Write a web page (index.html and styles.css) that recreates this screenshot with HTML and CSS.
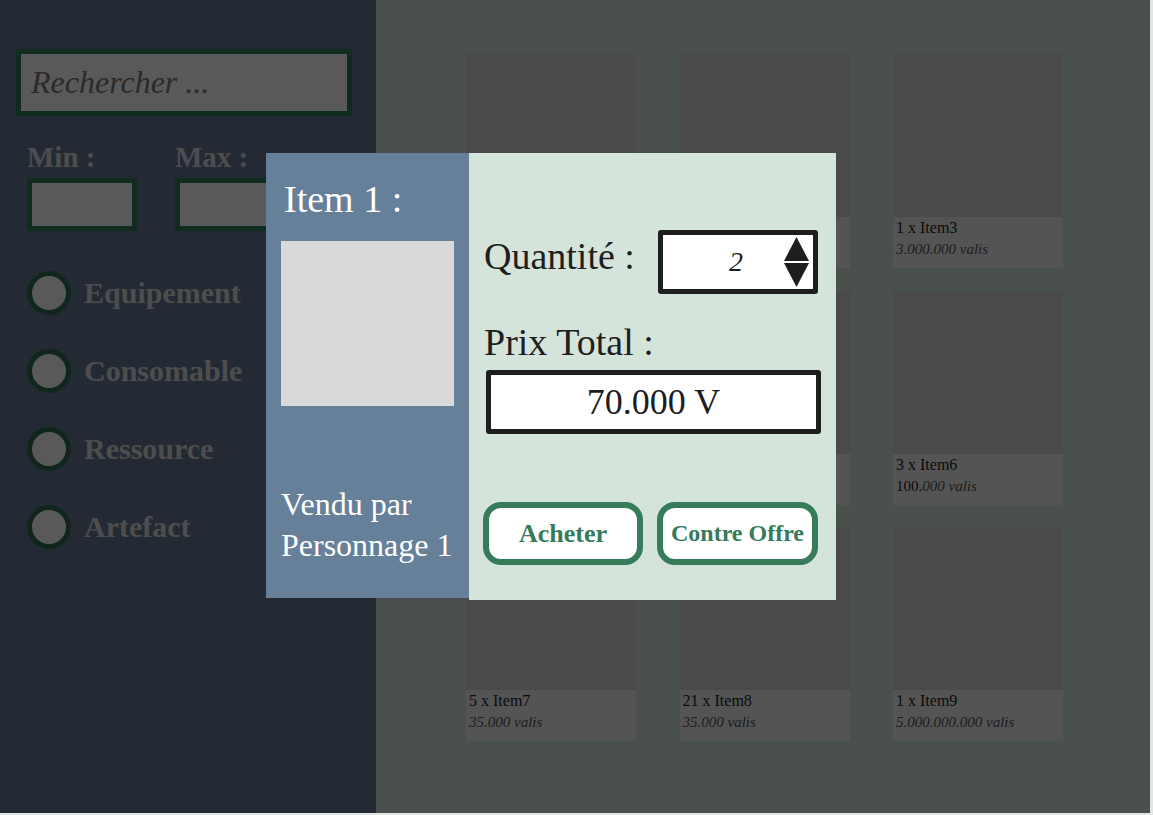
FILE: index.html
```html
<!DOCTYPE html>
<html lang="fr">
<head>
<meta charset="utf-8">
<title>Marché</title>
<link rel="stylesheet" href="styles.css">
</head>
<body>
<div class="app">
  <aside class="sidebar">
    <div class="search">Rechercher ...</div>
    <div class="range">
      <div class="range-group">
        <span class="range-label">Min :</span>
        <div class="range-input"></div>
      </div>
      <div class="range-group">
        <span class="range-label">Max :</span>
        <div class="range-input"></div>
      </div>
    </div>
    <ul class="categories">
      <li class="category"><span class="radio"></span><span class="category-label">Equipement</span></li>
      <li class="category"><span class="radio"></span><span class="category-label">Consomable</span></li>
      <li class="category"><span class="radio"></span><span class="category-label">Ressource</span></li>
      <li class="category"><span class="radio"></span><span class="category-label">Artefact</span></li>
    </ul>
  </aside>

  <main class="catalog">
    <div class="card"><div class="card-img"></div><div class="card-caption"><div class="card-title">2 x Item1</div><div class="card-price">35.000 valis</div></div></div>
    <div class="card"><div class="card-img"></div><div class="card-caption"><div class="card-title">4 x Item2</div><div class="card-price">12.000 valis</div></div></div>
    <div class="card"><div class="card-img"></div><div class="card-caption"><div class="card-title">1 x Item3</div><div class="card-price">3.000.000 valis</div></div></div>
    <div class="card"><div class="card-img"></div><div class="card-caption"><div class="card-title">1 x Item4</div><div class="card-price">8.000 valis</div></div></div>
    <div class="card"><div class="card-img"></div><div class="card-caption"><div class="card-title">6 x Item5</div><div class="card-price">20.000 valis</div></div></div>
    <div class="card"><div class="card-img"></div><div class="card-caption"><div class="card-title">3 x Item6</div><div class="card-price"><span class="upright">100.</span>000 valis</div></div></div>
    <div class="card"><div class="card-img"></div><div class="card-caption"><div class="card-title">5 x Item7</div><div class="card-price">35.000 valis</div></div></div>
    <div class="card"><div class="card-img"></div><div class="card-caption"><div class="card-title">21 x Item8</div><div class="card-price">35.000 valis</div></div></div>
    <div class="card"><div class="card-img"></div><div class="card-caption"><div class="card-title">1 x Item9</div><div class="card-price">5.000.000.000 valis</div></div></div>
  </main>

  <div class="overlay"></div>

  <section class="modal">
    <div class="modal-side">
      <h2 class="modal-title">Item 1 :</h2>
      <div class="modal-img"></div>
      <p class="seller">Vendu par<br>Personnage 1</p>
    </div>
    <div class="modal-main">
      <div class="qty-row">
        <span class="field-label qty-label">Quantité :</span>
        <div class="qty-box">
          <span class="qty-value">2</span>
          <svg class="spinner" width="25" height="50" viewBox="0 0 25 50">
            <polygon points="12.5,0 25,24 0,24" fill="#1e1e1e"/>
            <polygon points="0,26 25,26 12.5,50" fill="#1e1e1e"/>
          </svg>
        </div>
      </div>
      <span class="field-label total-label">Prix Total :</span>
      <div class="total-box">70.000 V</div>
      <div class="actions">
        <button class="btn btn-buy">Acheter</button>
        <button class="btn btn-offer">Contre Offre</button>
      </div>
    </div>
  </section>
</div>
</body>
</html>
```

FILE: styles.css
```css
* { box-sizing: border-box; }

html, body {
  margin: 0;
  padding: 0;
}

body {
  background: #dfe5e1;
  font-family: "Liberation Serif", "Times New Roman", serif;
}

.app {
  position: relative;
  width: 1150px;
  height: 813px;
  display: flex;
  overflow: hidden;
}

/* ---------- Sidebar ---------- */
.sidebar {
  width: 376px;
  flex: none;
  background: #647895;
  padding: 49px 0 0 16px;
}

.search {
  width: 336px;
  height: 67px;
  border: 5px solid #367b5a;
  background: #ffffff;
  padding-left: 10px;
  font-style: italic;
  font-size: 32px;
  line-height: 57px;
  color: #7a7a7a;
}

.range {
  display: flex;
  gap: 38px;
  margin: 24px 0 0 11px;
}

.range-group {
  display: flex;
  flex-direction: column;
  width: 110px;
}

.range-label {
  font-weight: bold;
  font-size: 29px;
  line-height: 34px;
  color: #dcdcdc;
  white-space: nowrap;
}

.range-input {
  margin-top: 4px;
  width: 110px;
  height: 53px;
  border: 5px solid #367b5a;
  border-radius: 3px;
  background: #ffffff;
}

.categories {
  list-style: none;
  margin: 40px 0 0 11px;
  padding: 0;
  display: flex;
  flex-direction: column;
  gap: 34px;
}

.category {
  display: flex;
  align-items: center;
  gap: 13px;
  height: 44px;
}

.radio {
  width: 44px;
  height: 44px;
  border-radius: 50%;
  border: 5px solid #2f6e50;
  background: #ffffff;
  flex: none;
}

.category-label {
  font-weight: bold;
  font-size: 30px;
  line-height: 36px;
  color: #dcdcdc;
}

/* ---------- Catalog ---------- */
.catalog {
  flex: 1;
  background: #d4e4da;
  padding: 54px 0 0 90px;
  display: grid;
  grid-template-columns: repeat(3, 170px);
  grid-auto-rows: 214px;
  column-gap: 43.5px;
  row-gap: 22.5px;
  align-content: start;
}

.card {
  display: flex;
  flex-direction: column;
}

.card-img {
  height: 163px;
  background: #d4d4d4;
}

.card-caption {
  height: 51px;
  background: #f0f0f0;
  padding: 2px 0 0 3px;
}

.card-title {
  font-size: 16px;
  line-height: 18px;
  color: #1e1e1e;
}

.card-price {
  margin-top: 3px;
  font-size: 15px;
  line-height: 18px;
  font-style: italic;
  color: #555555;
}

.upright {
  font-style: normal;
  color: #1e1e1e;
}

/* ---------- Overlay + modal ---------- */
.overlay {
  position: absolute;
  inset: 0;
  background: rgba(0, 0, 0, 0.65);
}

.modal {
  position: absolute;
  left: 266px;
  top: 153px;
  width: 569px;
  height: 447px;
  display: flex;
  z-index: 2;
}

.modal-side {
  width: 203px;
  flex: none;
  height: 445px;
  background: #67809a;
  padding: 24px 0 0 15px;
  display: flex;
  flex-direction: column;
}

.modal-title {
  margin: 0 0 0 3px;
  font-weight: normal;
  font-size: 38px;
  line-height: 44px;
  color: #ffffff;
}

.modal-img {
  margin-top: 20px;
  width: 173px;
  height: 165px;
  background: #d9d9d9;
}

.seller {
  margin: 78px 0 0;
  font-size: 32px;
  line-height: 41px;
  color: #ffffff;
  white-space: nowrap;
}

.modal-main {
  flex: 1;
  background: #d4e4da;
  padding: 77px 15px 0 15px;
  display: flex;
  flex-direction: column;
  align-items: flex-start;
}

.field-label {
  font-size: 38px;
  line-height: 44px;
  color: #1e1e1e;
  white-space: nowrap;
}

.qty-row {
  display: flex;
  align-items: flex-start;
  width: 100%;
}

.qty-label {
  margin-top: 4px;
}

.qty-box {
  margin-left: auto;
  margin-right: 3px;
  width: 160px;
  height: 64px;
  border: 5px solid #1e1e1e;
  border-radius: 3px;
  background: #ffffff;
  display: flex;
  align-items: center;
  padding-right: 4px;
}

.qty-value {
  flex: 1;
  padding-left: 29px;
  text-align: center;
  font-style: italic;
  font-size: 28px;
  color: #1e1e1e;
}

.spinner {
  display: block;
  margin-left: 4px;
}

.total-label {
  margin-top: 26px;
}

.total-box {
  margin: 6px 0 0 2px;
  width: 335px;
  height: 64px;
  border: 5px solid #1e1e1e;
  border-radius: 3px;
  background: #ffffff;
  display: flex;
  align-items: center;
  justify-content: center;
  font-size: 36px;
  color: #1e1e1e;
}

.actions {
  display: flex;
  gap: 14px;
  margin: 68px 0 0 -1px;
}

.btn {
  width: 160px;
  height: 63px;
  border: 6px solid #367b5a;
  border-radius: 18px;
  background: #ffffff;
  color: #367b5a;
  font-family: "Liberation Serif", "Times New Roman", serif;
  font-weight: bold;
  padding: 0;
  display: flex;
  align-items: center;
  justify-content: center;
}

.btn-buy { font-size: 26px; }

.btn-offer {
  width: 161px;
  font-size: 24px;
}
```
